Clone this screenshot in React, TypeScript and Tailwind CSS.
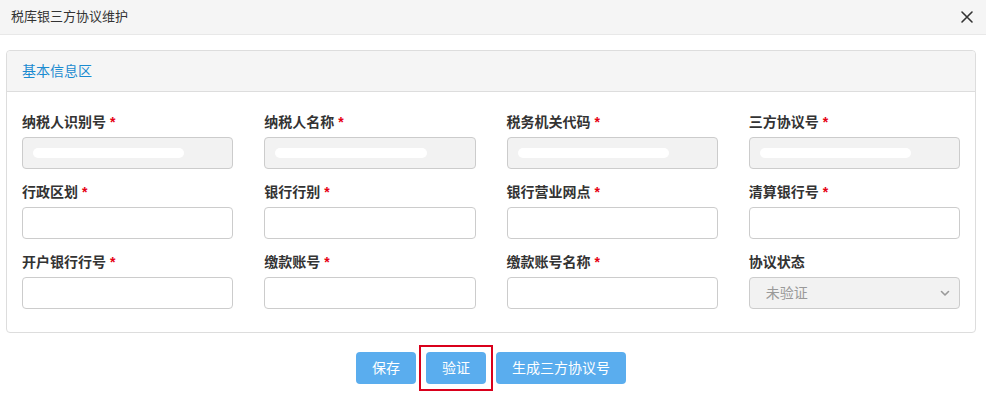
import React from "react";

const font = { fontFamily: '"Liberation Sans", "Noto Sans CJK SC", sans-serif' };

type Field = { label: string; req: boolean; disabled?: boolean; select?: boolean; masked?: boolean };

const fields: Field[] = [
  { label: "纳税人识别号", req: true, disabled: true, masked: true },
  { label: "纳税人名称", req: true, disabled: true, masked: true },
  { label: "税务机关代码", req: true, disabled: true, masked: true },
  { label: "三方协议号", req: true, disabled: true, masked: true },
  { label: "行政区划", req: true, masked: true },
  { label: "银行行别", req: true, masked: true },
  { label: "银行营业网点", req: true, masked: true },
  { label: "清算银行号", req: true },
  { label: "开户银行行号", req: true },
  { label: "缴款账号", req: true },
  { label: "缴款账号名称", req: true, masked: true },
  { label: "协议状态", req: false, select: true },
];

function FieldBox({ f }: { f: Field }) {
  return (
    <div className="flex flex-col">
      <div className="h-[16px] flex items-center text-[14px] font-bold text-[#333] leading-none">
        {f.label}
        {f.req && <span className="ml-[4px] text-[#e60012] text-[14px]">*</span>}
      </div>
      {f.select ? (
        <div className="mt-[7px] h-[32px] rounded-[4px] border border-[#ccc] bg-[#f2f2f2] flex items-center justify-between pl-[16px] pr-[8px]">
          <span className="text-[14px] text-[#999]">未验证</span>
          <svg width="12" height="12" viewBox="0 0 12 12" fill="none">
            <path d="M2.5 4.5 L6 8 L9.5 4.5" stroke="#999" strokeWidth="1.6" strokeLinecap="round" strokeLinejoin="round" />
          </svg>
        </div>
      ) : (
        <div
          className={`mt-[7px] h-[32px] rounded-[4px] border border-[#ccc] flex items-center px-[10px] ${
            f.disabled ? "bg-[#f2f2f2]" : "bg-white"
          }`}
        >
          {f.masked && f.disabled && <div className="h-[10px] w-[80%] rounded-full bg-white" />}
        </div>
      )}
    </div>
  );
}

export default function App() {
  return (
    <div className="w-[986px] h-[405px] bg-white overflow-hidden" style={font}>
      <div className="h-[35px] bg-[#f5f5f5] border-b border-[#e8e8e8] flex items-center justify-between pl-[11px] pr-[12px]">
        <span className="text-[13px] text-[#333]">税库银三方协议维护</span>
        <svg width="14" height="14" viewBox="0 0 14 14">
          <path d="M2 2 L12 12 M12 2 L2 12" stroke="#333" strokeWidth="1.6" strokeLinecap="round" />
        </svg>
      </div>
      <div className="px-[6px] pt-[15px]">
        <div className="w-[970px] rounded-[4px] border border-[#ddd]">
          <div className="h-[41px] bg-[#f5f5f5] border-b border-[#ddd] flex items-center px-[15px] rounded-t-[4px]">
            <span className="text-[14px] text-[#1b8bd0]">基本信息区</span>
          </div>
          <div className="px-[15px] pt-[22px] pb-[23px] grid grid-cols-4 gap-x-[31px] gap-y-[15px]">
            {fields.map((f) => (
              <FieldBox key={f.label} f={f} />
            ))}
          </div>
        </div>
      </div>
      <div className="flex justify-center items-center gap-[10px] mt-[19px] pr-[4px]">
        <button className="w-[60px] h-[32px] rounded-[4px] bg-[#5aadee] text-white text-[14px]">保存</button>
        <div className="border-2 border-[#d9001b] p-[5px] -m-[7px]">
          <button className="w-[60px] h-[32px] rounded-[4px] bg-[#5aadee] text-white text-[14px] block">验证</button>
        </div>
        <button className="w-[130px] h-[32px] rounded-[4px] bg-[#5aadee] text-white text-[14px]">生成三方协议号</button>
      </div>
    </div>
  );
}
